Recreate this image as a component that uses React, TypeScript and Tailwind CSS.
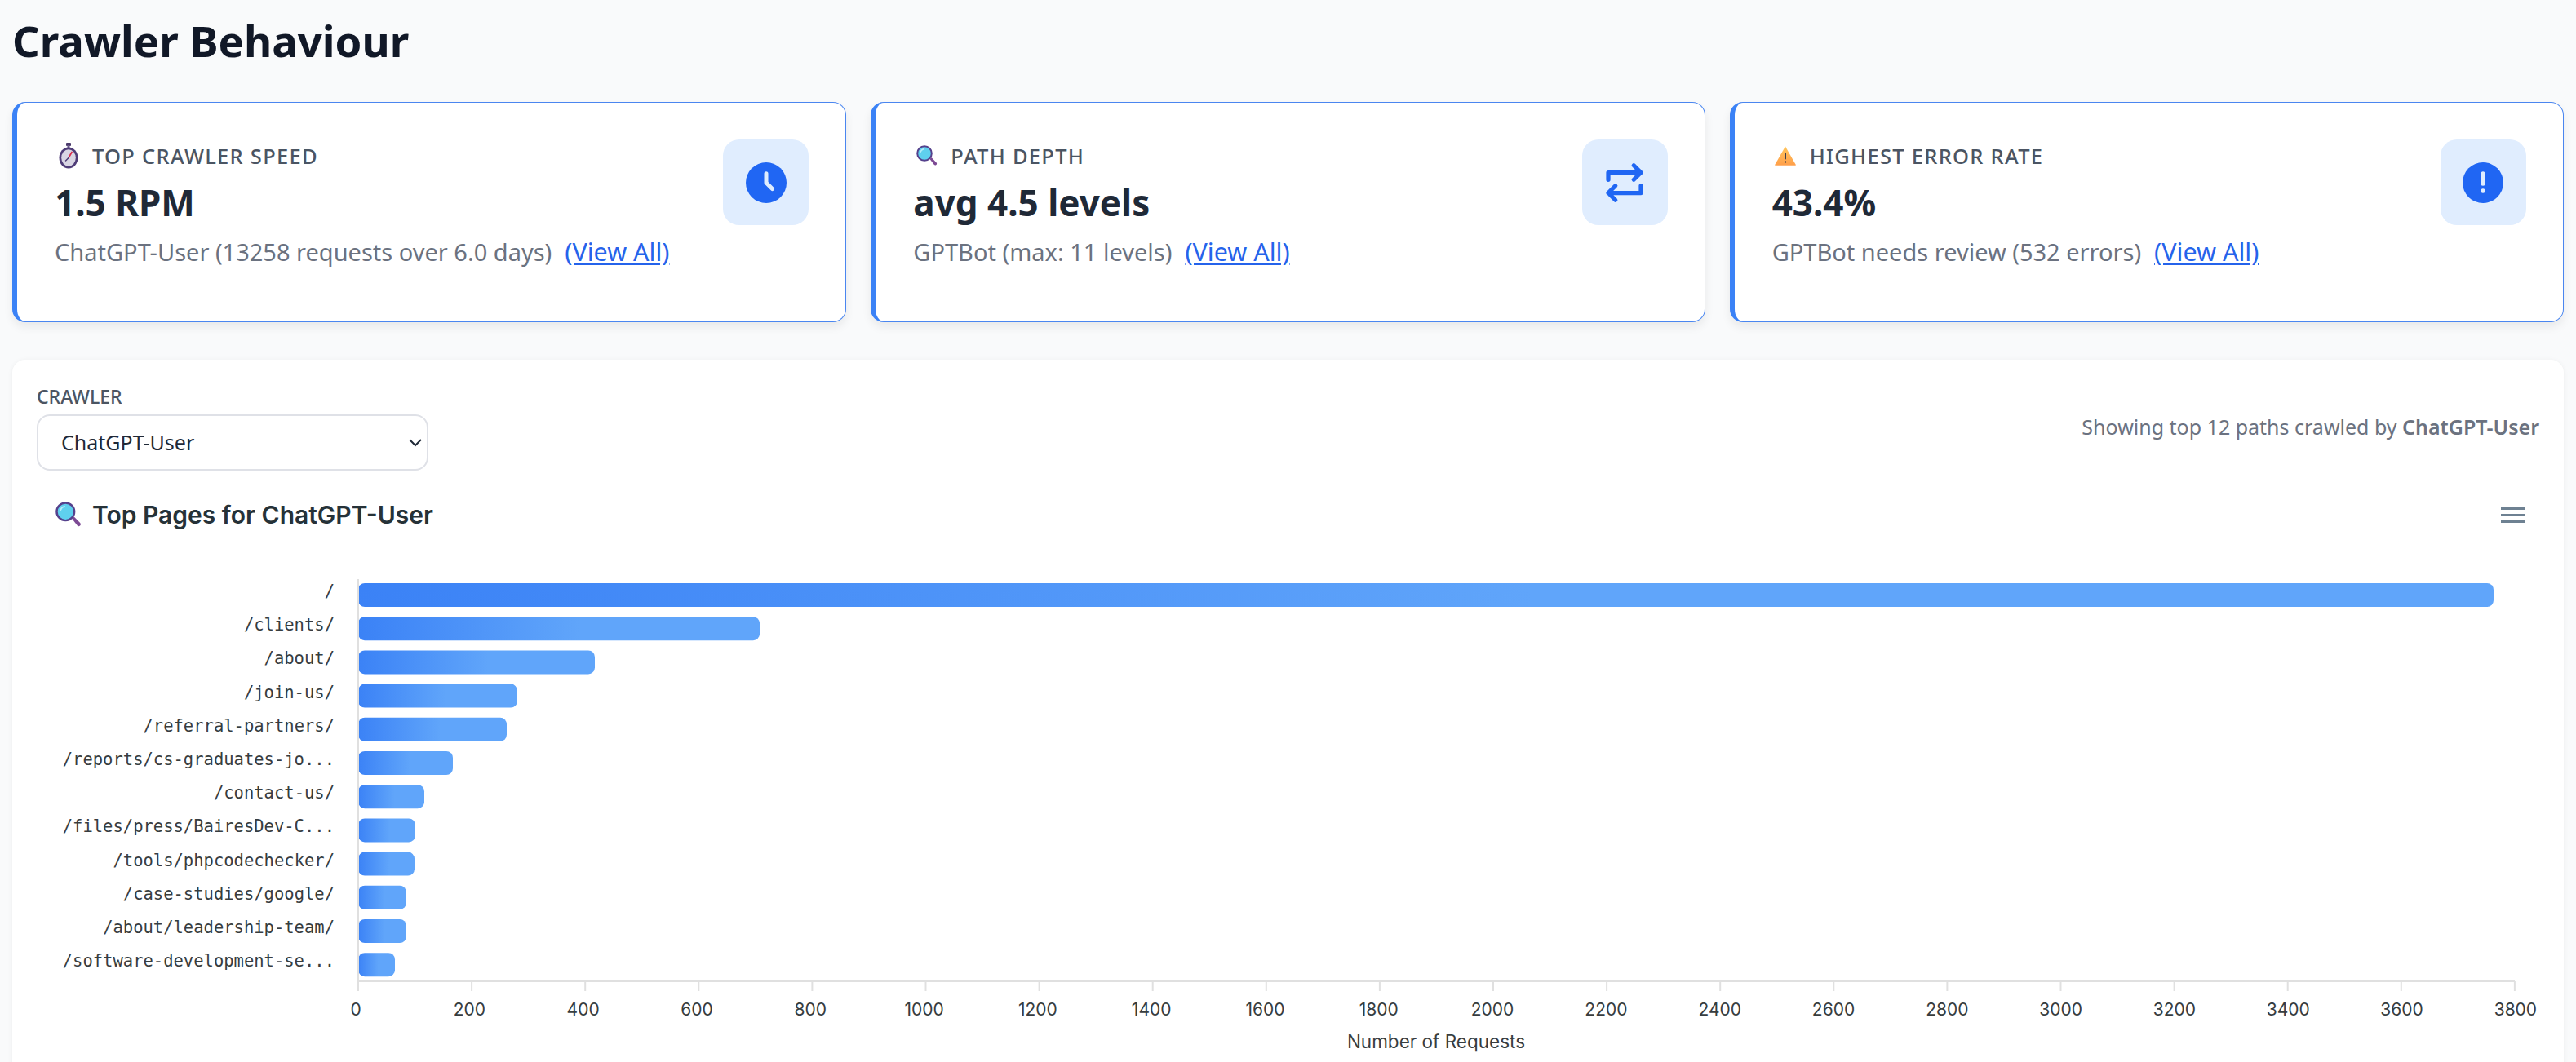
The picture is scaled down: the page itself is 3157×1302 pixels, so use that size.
import React from "react";

interface Bar {
  path: string;
  width: number;
}

const bars: Bar[] = [
  { path: "/", width: 2617 },
  { path: "/clients/", width: 492 },
  { path: "/about/", width: 290 },
  { path: "/join-us/", width: 195 },
  { path: "/referral-partners/", width: 182 },
  { path: "/reports/cs-graduates-jo...", width: 116 },
  { path: "/contact-us/", width: 81 },
  { path: "/files/press/BairesDev-C...", width: 70 },
  { path: "/tools/phpcodechecker/", width: 69 },
  { path: "/case-studies/google/", width: 59 },
  { path: "/about/leadership-team/", width: 59 },
  { path: "/software-development-se...", width: 45 },
];

const ticks = Array.from({ length: 20 }, (_, i) => i * 200);

const Stopwatch = () => (
  <svg viewBox="0 0 26 32" className="h-[32px] w-[26px]">
    <rect x="10" y="0" width="6" height="4" rx="1" fill="#4a3a6b" />
    <rect x="11.5" y="3" width="3" height="4" fill="#6b5a8c" />
    <ellipse cx="13" cy="18.500" rx="11.500" ry="13" fill="#4f3d78" />
    <ellipse cx="13" cy="18.500" rx="8.800" ry="10.200" fill="#d9d6e4" />
    <path d="M13 18.500l4-7" stroke="#d9304f" strokeWidth="1.800" strokeLinecap="round" />
    <path d="M13 18.500l-3.500 3.500" stroke="#4f3d78" strokeWidth="1.500" strokeLinecap="round" />
  </svg>
);

const Magnifier = ({ size }: { size: number }) => (
  <svg viewBox="0 0 26 26" width={size} height={size}>
    <path d="M16.5 17l2-2 6 6.2c.9 1 .8 2-.1 2.8-.9.8-1.9.7-2.7-.2z" fill="#7d4a94" />
    <circle cx="10" cy="10" r="8.8" fill="#5fd0ee" stroke="#55418c" strokeWidth="2" />
    <path d="M5 8.5c.6-2 2-3.300 4-3.800" stroke="#b4ecf9" strokeWidth="1.400" fill="none" strokeLinecap="round" />
  </svg>
);

const Warning = () => (
  <svg viewBox="0 0 26 24" className="h-[24px] w-[26px]">
    <defs>
      <linearGradient id="warn" x1="0" y1="0" x2="0" y2="1">
        <stop offset="0" stopColor="#ffc65c" />
        <stop offset="1" stopColor="#ff9f4a" />
      </linearGradient>
    </defs>
    <path d="M13 0.500L25.800 23a.6.6 0 0 1-.5.800H.7a.6.6 0 0 1-.5-.800z" fill="url(#warn)" />
    <rect x="12" y="8" width="2" height="8.500" rx="1" fill="#3d3d4a" />
    <circle cx="13" cy="19.500" r="1.200" fill="#3d3d4a" />
  </svg>
);

const ClockIcon = () => (
  <svg viewBox="0 0 24 24" className="h-[60px] w-[60px]">
    <circle cx="12" cy="12" r="10" fill="#2066f3" />
    <path d="M12 7.500V12l3 3" fill="none" stroke="#dfedfe" strokeWidth="2" strokeLinecap="round" strokeLinejoin="round" />
  </svg>
);

const ArrowsIcon = () => (
  <svg viewBox="0 0 24 24" className="h-[60px] w-[60px]" fill="none" stroke="#2066f3" strokeWidth="2.100" strokeLinecap="round" strokeLinejoin="round">
    <path d="M4 10.500V7h16M16.500 3.500L20 7l-3.500 3.500" />
    <path d="M20 13.500V17H4M7.500 20.500L4 17l3.500-3.500" />
  </svg>
);

const AlertIcon = () => (
  <svg viewBox="0 0 24 24" className="h-[60px] w-[60px]">
    <circle cx="12" cy="12" r="10" fill="#2066f3" />
    <path d="M12 7.500v5" stroke="#dfedfe" strokeWidth="2" strokeLinecap="round" />
    <circle cx="12" cy="16" r="1.100" fill="#dfedfe" />
  </svg>
);

const StatCard = ({
  emoji,
  label,
  value,
  detail,
  icon,
}: {
  emoji: React.ReactNode;
  label: string;
  value: string;
  detail: string;
  icon: React.ReactNode;
}) => (
  <div className="flex h-[270px] items-start justify-between rounded-[16px] border border-l-[6px] border-[#4a86f0] border-l-[#3b82f6] bg-white pt-[45px] pr-[45px] pl-[46px] shadow-[0_6px_12px_rgba(0,0,0,0.07)]">
    <div>
      <div className="mt-[2px] flex h-[36px] items-center gap-[13px] text-[25.500px] font-medium tracking-[0.05em] text-[#4b5563] uppercase">
        <span className="flex w-[33px] justify-center">{emoji}</span>
        <span>{label}</span>
      </div>
      <div className="mt-[11px] text-[44px] leading-[56px] font-bold text-[#1f2937]">{value}</div>
      <div className="mt-[14px] text-[29px] leading-[36px] text-[#6b7280]">
        {detail}
        <a href="#" className="ml-[16px] text-[30.500px] text-[#2563eb] underline">
          (View All)
        </a>
      </div>
    </div>
    <div className="flex h-[105px] w-[105px] items-center justify-center rounded-[20px] bg-[#e0edfe]">{icon}</div>
  </div>
);

export default function App() {
  return (
    <div className="h-screen overflow-hidden bg-[#f9fafb] px-[15px] pt-[16px] font-['Noto_Sans',sans-serif]">
      <h1 className="mb-[41px] text-[52.700px] leading-[68px] font-bold text-[#111827]">Crawler Behaviour</h1>

      <div className="mb-[46px] grid grid-cols-3 gap-[30px]">
        <StatCard
          emoji={<Stopwatch />}
          label="Top Crawler Speed"
          value="1.5 RPM"
          detail="ChatGPT-User (13258 requests over 6.0 days)"
          icon={<ClockIcon />}
        />
        <StatCard
          emoji={<Magnifier size={26} />}
          label="Path Depth"
          value="avg 4.5 levels"
          detail="GPTBot (max: 11 levels)"
          icon={<ArrowsIcon />}
        />
        <StatCard
          emoji={<Warning />}
          label="Highest Error Rate"
          value="43.4%"
          detail="GPTBot needs review (532 errors)"
          icon={<AlertIcon />}
        />
      </div>

      <div className="rounded-t-[16px] bg-white px-[30px] pt-[30px] pb-[30px] shadow-[0_1px_6px_rgba(0,0,0,0.06)]">
        <div className="flex items-center justify-between">
          <div>
            <label className="mb-[7px] block text-[23px] leading-[30px] font-medium text-[#4b5563] uppercase">Crawler</label>
            <div className="relative w-[480px]">
              <select className="h-[69px] w-full appearance-none rounded-[16px] border-2 border-[#dfe1e7] bg-white px-[28px] text-[25px] text-[#1f2937]">
                <option>ChatGPT-User</option>
              </select>
              <svg viewBox="0 0 16 10" className="absolute top-[30px] right-[8px] h-[10px] w-[16px]" fill="none" stroke="#1f2937" strokeWidth="2">
                <path d="M1 1l7 7 7-7" />
              </svg>
            </div>
          </div>
          <p className="text-[25px] text-[#6b7280]">
            Showing top 12 paths crawled by <strong className="font-semibold">ChatGPT-User</strong>
          </p>
        </div>

        <div className="mt-[34px] flex h-[40px] items-center justify-between pr-[18px] pl-[23px]">
          <div className="flex items-center gap-[13px] font-['Inter',sans-serif] text-[30px] font-semibold text-[#263238]">
            <Magnifier size={32} />
            <span>Top Pages for ChatGPT-User</span>
          </div>
          <div className="flex w-[29px] flex-col gap-[5px]">
            <div className="h-[3px] bg-[#6e8192]" />
            <div className="h-[3px] bg-[#6e8192]" />
            <div className="h-[3px] bg-[#6e8192]" />
          </div>
        </div>

        <svg viewBox="45 690 3067 612" className="mt-[39px] block h-[612px] w-full font-['Inter',sans-serif]">
          <defs>
            <linearGradient id="barFill" x1="0" y1="0" x2="1" y2="0">
              <stop offset="0" stopColor="#3b82f6" />
              <stop offset="0.55" stopColor="#60a5fa" />
              <stop offset="1" stopColor="#60a5fa" />
            </linearGradient>
          </defs>

          {bars.map((bar, i) => {
            const top = 715 + i * 41.2;
            return (
              <g key={bar.path}>
                <text x="410" y={top + 17} textAnchor="end" fontFamily="'DejaVu Sans Mono', monospace" fontSize="20.500" fill="#373d3f">
                  {bar.path}
                </text>
                <rect x="439" y={top} width={bar.width} height="29" rx="8" fill="url(#barFill)" />
              </g>
            );
          })}

          <path d="M439 710V1215" stroke="#e0e0e0" strokeWidth="2" />
          <path d="M439 1203H3082" stroke="#e0e0e0" strokeWidth="2" />
          {ticks.map((tick) => {
            const x = 439 + tick * 0.6955;
            return (
              <g key={tick}>
                <path d={`M${x} 1203V1215`} stroke="#e0e0e0" strokeWidth="2" />
                <text x={x - 3 + (tick / 3800) * 4} y="1245" textAnchor="middle" fontSize="21" fill="#373d3f">
                  {tick}
                </text>
              </g>
            );
          })}
          <text x="1760" y="1285" textAnchor="middle" fontSize="22.500" fontWeight="400" fill="#373d3f">
            Number of Requests
          </text>
        </svg>
      </div>
    </div>
  );
}
